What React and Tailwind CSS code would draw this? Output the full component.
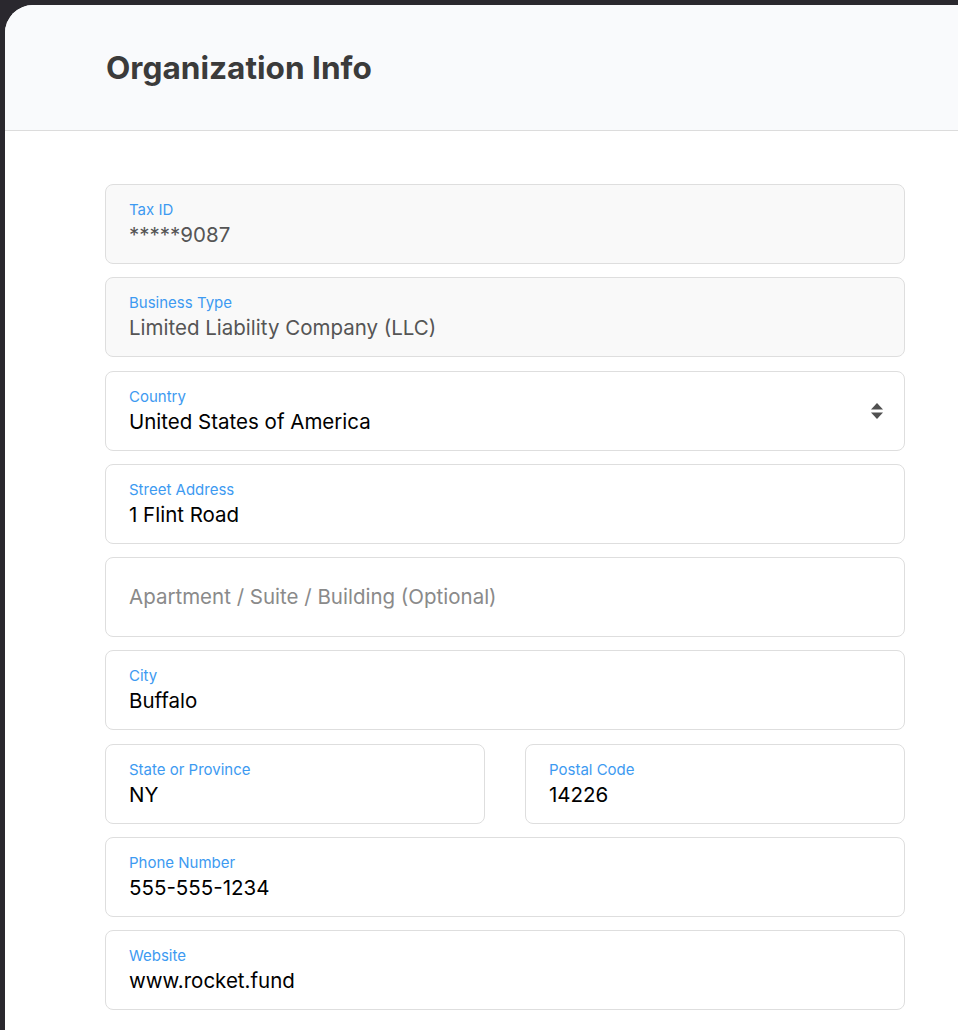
import React from "react"

const Field = ({ label, value, readOnly, placeholder, select }) => {
  if (placeholder) {
    return (
      <div className="h-[80px] rounded-lg border border-[#dedede] bg-white px-[23px] flex items-center">
        <span className="text-[20.5px] text-[#8a8a8a] mt-[1px]">{placeholder}</span>
      </div>
    )
  }
  return (
    <div
      className={`h-[80px] rounded-lg border border-[#dedede] pl-[23px] pr-[20px] flex items-center justify-between ${
        readOnly ? "bg-[#f9f9f9]" : "bg-white"
      }`}
    >
      <div className="flex flex-col mt-[1px]">
        <span className="text-[15px] leading-[20px] text-[#3d9af1]">{label}</span>
        <span className={`text-[20.5px] leading-[29px] ${readOnly ? "text-[#555555]" : "text-black"}`}>{value}</span>
      </div>
      {select && (
        <svg width="14" height="18" viewBox="0 0 14 18">
          <path d="M7 1 L13 7.5 H1 Z" fill="#505050" />
          <path d="M7 17 L13 10.5 H1 Z" fill="#505050" />
        </svg>
      )}
    </div>
  )
}

const App = () => {
  return (
    <div className="min-h-[1030px] bg-[#2a282e] pt-[5px] pl-[5px]" style={{ fontFamily: "Inter, 'Noto Sans', sans-serif" }}>
      <div className="min-h-[1025px] bg-white rounded-tl-[28px] overflow-hidden">
        <div className="h-[126px] bg-[#f9fafc] border-b border-[#dcdcdc] pl-[101px] flex items-center">
          <h1 className="text-[31.6px] font-bold text-[#3b3b3b]">Organization Info</h1>
        </div>
        <div className="pl-[100px] pt-[53px] w-[900px] flex flex-col gap-[13.3px]">
          <Field label="Tax ID" value="*****9087" readOnly />
          <Field label="Business Type" value="Limited Liability Company (LLC)" readOnly />
          <Field label="Country" value="United States of America" select />
          <Field label="Street Address" value="1 Flint Road" />
          <Field placeholder="Apartment / Suite / Building (Optional)" />
          <Field label="City" value="Buffalo" />
          <div className="grid grid-cols-2 gap-[40px]">
            <Field label="State or Province" value="NY" />
            <Field label="Postal Code" value="14226" />
          </div>
          <Field label="Phone Number" value="555-555-1234" />
          <Field label="Website" value="www.rocket.fund" />
        </div>
      </div>
    </div>
  )
}

export default App
